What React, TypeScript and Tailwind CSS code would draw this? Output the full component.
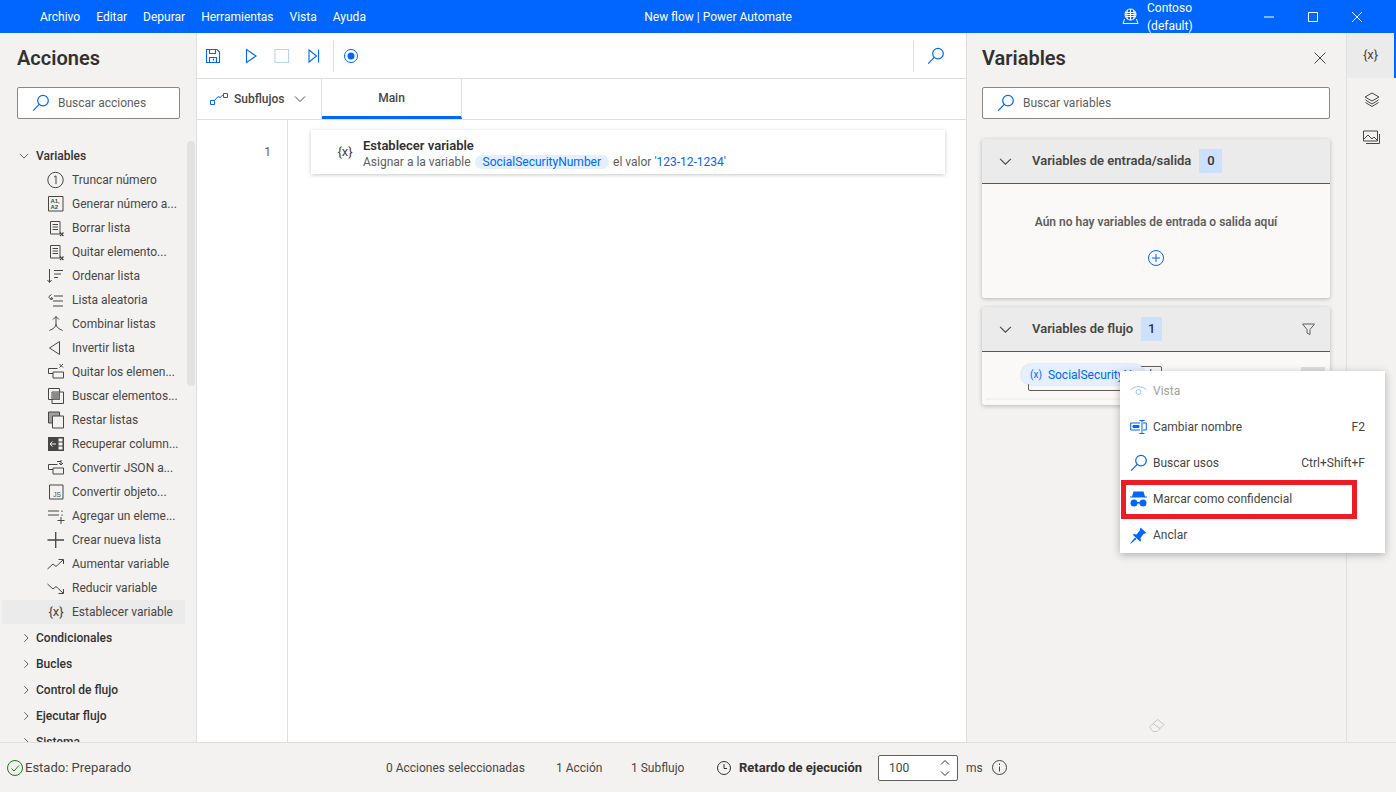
import type { ReactNode } from "react";

const BLUE = "#0066ff";
const DARK = "#484644";

function Ico({ size = 18, color = DARK, sw = 1, children }: { size?: number; color?: string; sw?: number; children: ReactNode }) {
  return (
    <svg width={size} height={size} viewBox="0 0 18 18" fill="none" stroke={color} strokeWidth={sw} className="shrink-0">
      {children}
    </svg>
  );
}

const SearchIcon = () => (
  <Ico size={18} color={BLUE} sw={1.2}>
    <circle cx="11" cy="6.6" r="5.3" />
    <path d="M7.2 10.4 1.2 16.6" />
  </Ico>
);

const Chevron = ({ size = 12, color = "#484644", right = false }: { size?: number; color?: string; right?: boolean }) => (
  <svg width={size} height={size} viewBox="0 0 12 12" fill="none" stroke={color} strokeWidth="1" className="shrink-0">
    {right ? <path d="M4 1.5 8.5 6 4 10.5" /> : <path d="M1 3.5 6 8.5 11 3.5" />}
  </svg>
);

const ListX = () => (
  <Ico>
    <path d="M3.5 2.5h9.5v12.5h-9.5zM5.5 5.5h5.5M5.5 8h5.5M5.5 10.5h5.5" />
    <path d="M13 13.5l3.5 3.5M16.5 13.5 13 17" strokeWidth="1.2" />
  </Ico>
);

const actionItems: { label: string; icon: ReactNode }[] = [
  { label: "Truncar número", icon: <Ico><circle cx="8.5" cy="9" r="7.7" /><path d="M7 6.2 9 4.8v8.4" /></Ico> },
  {
    label: "Generar número a...",
    icon: (
      <Ico>
        <path d="M1.5 1.5h14.5v14.5H1.5z" />
        <text x="3.4" y="7.8" fontSize="6" fontWeight="700" fill={DARK} stroke="none" fontFamily="Liberation Sans, sans-serif">A1,</text>
        <text x="3.4" y="14" fontSize="6" fontWeight="700" fill={DARK} stroke="none" fontFamily="Liberation Sans, sans-serif">A2</text>
      </Ico>
    ),
  },
  { label: "Borrar lista", icon: <ListX /> },
  { label: "Quitar elemento...", icon: <ListX /> },
  { label: "Ordenar lista", icon: <Ico><path d="M2.5 2v13M.5 13l2 2.5 2-2.5M7 3.5h9M7 7h7M7 10.5h4" /></Ico> },
  { label: "Lista aleatoria", icon: <Ico><path d="M6 15h10M6 10h10M7 5h9M4.5 3.5 2 5.5c0 2 1 2.5 3.5 2.5M3.500 8.500l2-.5-1-2" /></Ico> },
  { label: "Combinar listas", icon: <Ico><path d="M9 1.500V9c0 3-3 5-6.500 6.500M9 9c0 3 3 5 6.500 6.500M6 4.500l3-3 3 3" /></Ico> },
  { label: "Invertir lista", icon: <Ico><path d="M12.500 2.500v13L2.500 9z" /></Ico> },
  { label: "Quitar los elemen...", icon: <Ico><path d="M10.500 5.500H1.500v5h4.500M6 9h10.500v6H6zM12.500 1l3.500 3.500M16 1l-3.500 3.500" /></Ico> },
  {
    label: "Buscar elementos...",
    icon: (
      <Ico>
        <path d="M1.500 1.500h11v11h-11z" />
        <path d="M5 5h11.500v11.500H5z" />
        <path d="M5.500 5.500h7v7h-7z" fill="#8a8886" stroke="none" />
      </Ico>
    ),
  },
  {
    label: "Restar listas",
    icon: (
      <Ico>
        <path d="M1.500 1h11v11h-11z" fill="#a19f9d" />
        <path d="M5.500 5h11v12h-11z" fill="#f3f2f1" />
      </Ico>
    ),
  },
  {
    label: "Recuperar column...",
    icon: (
      <Ico>
        <path d="M1 2h16v14H1z" fill={DARK} stroke="none" />
        <path d="M11.500 3.500h4v3h-4zM11.500 7.500h4v3h-4zM11.500 11.500h4v3h-4z" fill="#f3f2f1" stroke="none" />
        <path d="M9 9H3M5.500 6.500 3 9l2.500 2.500" stroke="#f3f2f1" />
      </Ico>
    ),
  },
  { label: "Convertir JSON a...", icon: <Ico><path d="M10.500 5.500H1.500v5h4.500M6 9h10.500v6H6zM14 1v5M12 4l2 2 2-2M10 2.500h4" /></Ico> },
  {
    label: "Convertir objeto...",
    icon: (
      <Ico>
        <path d="M2.500 2h13.500v14H2.500z" />
        <text x="6.200" y="14" fontSize="6.500" fill={DARK} stroke="none" fontFamily="Liberation Sans, sans-serif">JS</text>
      </Ico>
    ),
  },
  { label: "Agregar un eleme...", icon: <Ico><path d="M1 4h11M1 8h11M15 3.500v1.500M15 7.500V9M14 10v7M10.500 13.500h7" /></Ico> },
  { label: "Crear nueva lista", icon: <Ico sw={1.3}><path d="M.5 9h16.500M8.700 1v16" /></Ico> },
  { label: "Aumentar variable", icon: <Ico><path d="M.5 14l5.500-5 3 2.500L16 5M11.500 4.500H16.500V9" /></Ico> },
  { label: "Reducir variable", icon: <Ico><path d="M.5 5l5.500 5 3-2.500L16 14M11.500 14.500H16.500V10" /></Ico> },
  { label: "Establecer variable", icon: <span className="block w-[18px] text-center text-[13px] leading-[18px] text-[#484644]">{"{x}"}</span> },
];

const groups = ["Condicionales", "Bucles", "Control de flujo", "Ejecutar flujo", "Sistema"];

function TitleBar() {
  return (
    <div className="flex h-[33px] items-center bg-[#0066ff] text-[12px] text-white">
      <div className="flex flex-1 gap-4 pl-10">
        {["Archivo", "Editar", "Depurar", "Herramientas", "Vista", "Ayuda"].map((m) => (
          <span key={m}>{m}</span>
        ))}
      </div>
      <div>New flow | Power Automate</div>
      <div className="flex flex-1 items-center justify-end">
        <svg width="17" height="17" viewBox="0 0 17 17" fill="none" stroke="#fff" strokeWidth="1">
          <circle cx="8.500" cy="6.500" r="5.500" />
          <path d="M3 6.500h11M8.500 1v11M5.500 2c-1 3-1 6 0 9M11.500 2c1 3 1 6 0 9M3 4.500h11M3 8.500h11M2.500 11 1 15.500h15L14.500 11" />
        </svg>
        <span className="ml-2 w-[92px]">Contoso (default)</span>
        <svg width="140" height="12" viewBox="0 0 140 12" fill="none" stroke="#fff" strokeWidth="1" className="mr-[17px]">
          <path d="M25 6h10M69.500 1.500h9v9h-9zM113 1l10 10M123 1l-10 10" />
        </svg>
      </div>
    </div>
  );
}

function ActionsPanel() {
  return (
    <aside className="relative flex h-full w-[197px] shrink-0 flex-col overflow-hidden border-r border-[#e1dfdd] bg-[#f3f2f1]">
      <h2 className="mt-[11px] pl-[17px] text-[20px] font-semibold leading-[28px] text-[#323130]">Acciones</h2>
      <div className="ml-[17px] mt-[15px] flex h-[32px] w-[163px] shrink-0 items-center rounded-[2px] border border-[#8a8886] bg-white pl-[14px] text-[#605e5c]">
        <SearchIcon />
        <span className="ml-[8px]">Buscar acciones</span>
      </div>
      <div className="absolute left-[187px] top-[108px] h-[245px] w-[8px] rounded-[4px] bg-[#e3e2e1]" />
      <div className="mt-[25px] flex h-[24px] shrink-0 items-center pl-[19px] font-medium text-[#323130]">
        <Chevron size={10} />
        <span className="ml-[7px]">Variables</span>
      </div>
      {actionItems.map((it) => (
        <div
          key={it.label}
          className={`ml-[2px] flex h-[24px] w-[183px] shrink-0 items-center pl-[45px] text-[#484644] ${
            it.label === "Establecer variable" ? "bg-[#ebebeb]" : ""
          }`}
        >
          {it.icon}
          <span className="ml-[7px] whitespace-nowrap">{it.label}</span>
        </div>
      ))}
      <div className="mt-[1px]">
        {groups.map((g) => (
          <div key={g} className="flex h-[26px] items-center pl-[21px] font-medium text-[#323130]">
            <Chevron size={10} right />
            <span className="ml-[5px]">{g}</span>
          </div>
        ))}
      </div>
    </aside>
  );
}

function Canvas() {
  return (
    <main className="flex h-full w-[769px] shrink-0 flex-col bg-white">
      <div className="flex h-[46px] shrink-0 items-center border-b border-[#e1dfdd]">
        <div className="flex items-center pl-[8px]">
          <svg width="130" height="18" viewBox="0 0 130 18" fill="none" stroke={BLUE} strokeWidth="1.100">
            <path d="M1.500 2.500h10.500l2.500 2.500v10.500H1.500zM4.500 2.500v4h6v-4M4.500 15.500v-5h7v5M8.500 11.500v2" />
            <path d="M41.500 2.500v13l9.500-6.500z" />
            <path d="M70 2.500h13.500v13H70z" stroke="#b8d3ff" />
            <path d="M104 3v12l7.500-6zM113.500 2.500v13" />
          </svg>
        </div>
        <div className="ml-[-2px] h-[32px] w-px bg-[#e1dfdd]" />
        <svg width="16" height="16" viewBox="0 0 16 16" fill="none" className="ml-[9px]">
          <circle cx="8" cy="8" r="6.500" stroke={BLUE} />
          <circle cx="8" cy="8" r="3.500" fill={BLUE} />
        </svg>
        <div className="ml-auto h-[32px] w-px bg-[#e1dfdd]" />
        <div className="ml-[13px] mr-[21px]">
          <SearchIcon />
        </div>
      </div>
      <div className="flex h-[41px] shrink-0 border-b border-[#e1dfdd]">
        <div className="flex w-[125px] items-center border-r border-[#e1dfdd] pl-[13px] font-medium text-[#484644]">
          <svg width="18" height="14" viewBox="0 0 18 14" fill="none" stroke={BLUE}>
            <path d="M.5 8.500h4v4h-4zM13.500 1.500h4v4h-4zM4.500 8.500 8 4.500l2 1 3.500-3" />
          </svg>
          <span className="ml-[6px]">Subflujos</span>
          <span className="ml-[10px]">
            <Chevron size={12} />
          </span>
        </div>
        <div className="flex w-[140px] items-center justify-center border-b-[3px] border-r border-b-[#0066ff] border-r-[#e1dfdd] font-medium text-[#484644]">
          Main
        </div>
      </div>
      <div className="flex min-h-0 flex-1">
        <div className="w-[91px] shrink-0 border-r border-[#e1dfdd] pr-[16px] pt-[23px] text-right text-[#605e5c]">1</div>
        <div className="flex-1 pl-[23px] pr-[21px] pt-[10px]">
          <div className="flex h-[44px] items-center bg-white pl-[25px] shadow-[0_1px_4px_rgba(0,0,0,0.22)]">
            <span className="w-[18px] text-center text-[13px] text-[#484644]">{"{x}"}</span>
            <div className="ml-[9px] pt-[2px]">
              <div className="text-[13px] font-semibold leading-[15px] text-[#323130]">Establecer variable</div>
              <div className="mt-[2px] flex items-center leading-[14px] text-[#605e5c]">
                Asignar a la variable
                <span className="mx-[4px] rounded-full bg-[#e5f0ff] px-[8px] text-[#0066ff]">SocialSecurityNumber</span>
                el valor <span className="ml-[3px] text-[#0066ff]">'123-12-1234'</span>
              </div>
            </div>
          </div>
        </div>
      </div>
    </main>
  );
}

function Badge({ n, w }: { n: number; w: string }) {
  return <span className={`ml-[8px] flex h-[24px] ${w} items-center justify-center bg-[#cce0ff] font-medium text-[#323130]`}>{n}</span>;
}

function MenuRow({ icon, label, hint, faded }: { icon: ReactNode; label: string; hint?: string; faded?: boolean }) {
  return (
    <div className={`flex h-[36px] items-center pl-[10px] pr-[20px] ${faded ? "text-[#a19f9d]" : "text-[#484644]"}`}>
      <span className="flex w-[17px] justify-center">{icon}</span>
      <span className="ml-[6px] flex-1">{label}</span>
      {hint && <span>{hint}</span>}
    </div>
  );
}

function VariablesPanel() {
  return (
    <aside className="relative h-full w-[381px] shrink-0 border-x border-[#e1dfdd] bg-[#f3f2f1] px-[15px]">
      <div className="mt-[11px] flex h-[28px] items-center justify-between">
        <h2 className="text-[20px] font-semibold text-[#323130]">Variables</h2>
        <svg width="12" height="12" viewBox="0 0 12 12" stroke="#484644" className="mr-[5px]">
          <path d="M.5.5l11 11M11.500.5l-11 11" />
        </svg>
      </div>
      <div className="mt-[15px] flex h-[32px] w-[348px] items-center rounded-[2px] border border-[#8a8886] bg-white pl-[14px] text-[#605e5c]">
        <SearchIcon />
        <span className="ml-[8px]">Buscar variables</span>
      </div>
      <section className="mt-[20px] w-[348px] rounded-[3px] bg-[#faf9f8] shadow-[0_1px_4px_rgba(0,0,0,0.25)]">
        <div className="flex h-[45px] items-center border-b border-[#0f62e0] bg-[#ebebeb] pl-[17px] text-[13px]">
          <Chevron size={13} />
          <span className="ml-[20px] font-semibold text-[#484644]">Variables de entrada/salida</span>
          <Badge n={0} w="w-[23px]" />
        </div>
        <div className="flex h-[114px] flex-col items-center pt-[29px]">
          <span className="font-semibold text-[#605e5c]">Aún no hay variables de entrada o salida aquí</span>
          <svg width="18" height="18" viewBox="0 0 18 18" fill="none" stroke={BLUE} className="mt-[18px]">
            <circle cx="9" cy="9" r="7.500" />
            <path d="M9 5v8M5 9h8" />
          </svg>
        </div>
      </section>
      <section className="relative mt-[9px] h-[98px] w-[348px] rounded-[3px] bg-[#faf9f8] shadow-[0_1px_4px_rgba(0,0,0,0.25)]">
        <div className="flex h-[45px] items-center border-b border-[#0f62e0] bg-[#ebebeb] pl-[17px] text-[13px]">
          <Chevron size={13} />
          <span className="ml-[20px] font-semibold text-[#484644]">Variables de flujo</span>
          <Badge n={1} w="w-[21px]" />
          <svg width="13" height="13" viewBox="0 0 13 13" fill="none" stroke="#605e5c" className="ml-auto mr-[15px]">
            <path d="M.5 1h12L8 6.500v5L5 10V6.500z" />
          </svg>
        </div>
        <div className="absolute left-[4px] right-[4px] top-[91px] h-[2px] bg-[#f3f2f1]" />
        <div className="absolute left-[46px] top-[59px] h-[25px] w-[134px] rounded-[2px] border border-[#605e5c]" />
        <div className="absolute left-[319px] top-[60px] h-[24px] w-[24px] bg-[#e1dfdd]" />
        <div className="absolute left-[39px] top-[57px] flex h-[21px] w-[124px] items-center rounded-full bg-[#e5f0ff] pl-[9px] text-[#0066ff] shadow-[0_0_2px_rgba(0,0,0,0.2)]">
          <span className="text-[10px]">(x)</span>
          <span className="ml-[6px]">SocialSecurityNumber</span>
        </div>
      </section>
      <div className="absolute bottom-[8px] left-[181px]">
        <svg width="18" height="18" viewBox="0 0 18 18" fill="none" stroke="#c8c6c4">
          <path d="M1.500 11 9.500 3.500l6.500 5-7 7H5zM5 7.500l7 5" />
        </svg>
      </div>
      {/* context menu over the flow variable */}
      <div className="absolute left-[153px] top-[338px] z-10 w-[265px] bg-white pt-[2px] shadow-[0_2px_8px_rgba(0,0,0,0.28)]">
        <MenuRow
          faded
          label="Vista"
          icon={
            <svg width="17" height="12" viewBox="0 0 17 12" fill="none" stroke="#9dc2ff">
              <path d="M.5 5C4 .5 13 .5 16.500 5" />
              <circle cx="8.500" cy="7" r="2.500" />
            </svg>
          }
        />
        <MenuRow
          label="Cambiar nombre"
          hint="F2"
          icon={
            <svg width="17" height="14" viewBox="0 0 17 14" fill="none" stroke={BLUE}>
              <path d="M10 3H.7v7H10M13 3h3.300v7H13M9.500.5h5M12 .5v13M9.500 13.500h5" />
              <path d="M3 5.500h6v2H3z" fill={BLUE} />
            </svg>
          }
        />
        <MenuRow label="Buscar usos" hint="Ctrl+Shift+F" icon={<SearchIcon />} />
        <MenuRow
          label="Marcar como confidencial"
          icon={
            <svg width="17" height="16" viewBox="0 0 17 16" fill={BLUE}>
              <path d="M3.500.5h10l1.500 5H17v1H0v-1h2z" />
              <circle cx="4" cy="12" r="3.500" />
              <circle cx="13" cy="12" r="3.500" />
              <path d="M6 11h5v1.500H6z" />
            </svg>
          }
        />
        <MenuRow
          label="Anclar"
          icon={
            <svg width="17" height="17" viewBox="0 0 17 17" fill={BLUE}>
              <path d="M10.500.5 16.500 6l-3 1-3 4 .5 3-1 .5L3 8l.5-1 3 .5 3-3.500zM5 10.500 6.500 12 1 16.500 0 16.500z" />
            </svg>
          }
        />
        <div className="absolute left-[1px] top-[109px] h-[39px] w-[236px] border-[5px] border-[#ed1c24]" />
      </div>
    </aside>
  );
}

function Rail() {
  return (
    <div className="flex h-full flex-1 flex-col items-center bg-[#f3f2f1]">
      <div className="flex h-[45px] w-full items-center justify-center border-r-2 border-[#0066ff] bg-[#ebebeb] pb-[2px] text-[13px] text-[#484644]">
        {"{x}"}
      </div>
      <svg width="16" height="16" viewBox="0 0 16 16" fill="none" stroke="#484644" className="mt-[14px]">
        <path d="M8 1 15 5 8 9 1 5zM1.500 8 8 12l6.500-4M1.500 10.500 8 14.500l6.500-4" />
      </svg>
      <svg width="17" height="15" viewBox="0 0 17 15" fill="none" stroke="#484644" className="mt-[22px]">
        <path d="M.5 1h14v10H.5zM3 13.500h13.500V4M1 9l4-4 4 4 2-2 3 3" />
      </svg>
    </div>
  );
}

function StatusBar() {
  return (
    <div className="flex h-[50px] items-center border-t border-[#e1dfdd] bg-[#f3f2f1] text-[#484644]">
      <svg width="16" height="16" viewBox="0 0 16 16" fill="none" stroke="#107c10" className="ml-[7px]">
        <circle cx="8" cy="8" r="7.500" />
        <path d="M4.500 8.500 7 11l5-5.500" />
      </svg>
      <span className="ml-[2px] w-[361px] text-[13px]">Estado: Preparado</span>
      <span className="w-[170px]">0 Acciones seleccionadas</span>
      <span className="w-[75px]">1 Acción</span>
      <span className="w-[86px]">1 Subflujo</span>
      <svg width="14" height="14" viewBox="0 0 14 14" fill="none" stroke="#323130">
        <circle cx="7" cy="7" r="6.500" />
        <path d="M7 3v4.500h3" />
      </svg>
      <span className="ml-[8px] w-[139px] text-[13px] font-bold text-[#323130]">Retardo de ejecución</span>
      <div className="flex h-[26px] w-[80px] items-center justify-between rounded-[2px] border border-[#605e5c] bg-white pl-[10px] pr-[6px]">
        100
        <svg width="12" height="20" viewBox="0 0 12 20" fill="none" stroke="#323130">
          <path d="M2 6.500 6 2.500l4 4M2 13.500l4 4 4-4" />
        </svg>
      </div>
      <span className="ml-[8px]">ms</span>
      <svg width="15" height="15" viewBox="0 0 15 15" fill="none" stroke="#484644" className="ml-[9px]">
        <circle cx="7.500" cy="7.500" r="7" />
        <path d="M7.500 6.500v5M7.500 3.500v1.500" />
      </svg>
    </div>
  );
}

export default function App() {
  return (
    <div className="flex h-[792px] w-[1396px] flex-col overflow-hidden font-['Roboto',sans-serif] text-[12px]">
      <TitleBar />
      <div className="flex min-h-0 flex-1">
        <ActionsPanel />
        <Canvas />
        <VariablesPanel />
        <Rail />
      </div>
      <StatusBar />
    </div>
  );
}
